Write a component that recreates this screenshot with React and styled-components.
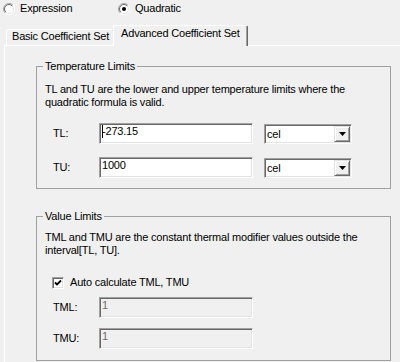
import React, { useId } from "react";
import styled, { createGlobalStyle } from "styled-components";

const Global = createGlobalStyle`
  html, body { margin: 0; padding: 0; background: #f0f0f0; }
  body {
    font-family: "Liberation Sans", Arial, sans-serif;
    font-size: 11px;
    line-height: 13px;
    letter-spacing: -0.2px;
    color: #000;
  }
  #root { width: 400px; height: 362px; overflow: hidden; }
  * { box-sizing: border-box; }
`;

const Page = styled.div`
  width: 400px;
  height: 362px;
  overflow: hidden;
  background: #f0f0f0;
  display: flex;
  flex-direction: column;
`;

const RadioRow = styled.div`
  display: flex;
  padding: 2px 0 0 3px;
  height: 15px;
`;

const RadioOption = styled.label`
  display: flex;
  align-items: center;
  gap: 5px;
  width: ${(p) => p.$w}px;
  height: 13px;
  white-space: nowrap;
`;

const TabStrip = styled.div`
  display: flex;
  align-items: flex-end;
  margin-top: 10px;
  height: 20px;
  padding-left: 6px;
`;

const Tab = styled.div`
  position: relative;
  z-index: ${(p) => (p.$active ? 1 : 0)};
  height: ${(p) => (p.$active ? 21 : 16)}px;
  margin-left: ${(p) => (p.$active ? -2 : 0)}px;
  margin-bottom: ${(p) => (p.$active ? -1 : 0)}px;
  padding: ${(p) => (p.$active ? "1px 7px 0 7px" : "0 5px")};
  background: #f0f0f0;
  border-top: 1px solid #fff;
  border-left: 1px solid #fff;
  border-right: 1px solid #696969;
  box-shadow: inset -1px 0 0 #a0a0a0;
  border-radius: 2px 2px 0 0;
  white-space: nowrap;
`;

const Panel = styled.div`
  flex: 1;
  margin-left: 4px;
  border-left: 1px solid #fff;
  border-top: 1px solid #fff;
  padding: 14px 0 0 31px;
  display: flex;
  flex-direction: column;
`;

const GroupBox = styled.fieldset`
  margin: ${(p) => p.$mt || 0}px 0 0 0;
  width: 355px;
  min-width: 0;
  border: 1px solid #a0a0a0;
  border-radius: 0;
  padding: ${(p) => p.$pt}px 8px ${(p) => p.$pb}px 8px;
  display: flex;
  flex-direction: column;
`;

const Legend = styled.legend`
  padding: 0 2px;
  margin-left: -2px;
  line-height: 13px;
`;

const Desc = styled.p`
  margin: 0;
  line-height: 13px;
`;

const FieldRow = styled.div`
  display: flex;
  align-items: flex-end;
  height: 21px;
  margin-top: ${(p) => p.$mt}px;
`;

const FieldLabel = styled.span`
  align-self: center;
  width: 46px;
  margin-left: 8px;
`;

const sunken = `
  border: 1px solid;
  border-color: #a0a0a0 #fff #fff #a0a0a0;
  box-shadow: inset 1px 1px 0 #696969, inset -1px -1px 0 #e3e3e3;
`;

const TextField = styled.div`
  ${sunken}
  width: 154px;
  height: 21px;
  padding: 1px 0 0 2px;
  background: ${(p) => (p.$disabled ? "#f0f0f0" : "#fff")};
  color: ${(p) => (p.$disabled ? "#6d6d6d" : "#000")};
  white-space: nowrap;
`;

const Caret = styled.span`
  display: inline-block;
  width: 1px;
  height: 13px;
  background: #000;
  vertical-align: top;
  margin-right: -1px;
`;

const Combo = styled.div`
  ${sunken}
  margin-left: 11px;
  width: 88px;
  height: 20px;
  background: #fff;
  display: flex;
  padding: 1px;
`;

const ComboText = styled.span`
  flex: 1;
  align-self: center;
  padding-left: 1px;
`;

const DropButton = styled.div`
  width: 16px;
  height: 16px;
  background: #f0f0f0;
  border: 1px solid;
  border-color: #e3e3e3 #696969 #696969 #e3e3e3;
  box-shadow: inset 1px 1px 0 #fff, inset -1px -1px 0 #a0a0a0;
  display: flex;
  align-items: center;
  justify-content: center;
`;

const CheckRow = styled.label`
  display: flex;
  align-items: center;
  gap: 6px;
  height: 13px;
  margin-top: ${(p) => p.$mt}px;
  padding-left: 7px;
`;

const CheckBox = styled.span`
  ${sunken}
  width: 12px;
  height: 12px;
  background: #fff;
  display: flex;
  align-items: center;
  justify-content: center;
`;

function Radio({ checked }) {
  const id = useId().replace(/:/g, "");
  return (
    <svg width="12" height="12" viewBox="0 0 12 12">
      <defs>
        <linearGradient id={`o${id}`} x1="0" y1="0" x2="1" y2="1">
          <stop offset="0.45" stopColor="#a0a0a0" />
          <stop offset="0.55" stopColor="#ffffff" />
        </linearGradient>
        <linearGradient id={`i${id}`} x1="0" y1="0" x2="1" y2="1">
          <stop offset="0.45" stopColor="#696969" />
          <stop offset="0.55" stopColor="#e3e3e3" />
        </linearGradient>
      </defs>
      <circle cx="6" cy="6" r="5.5" fill="none" stroke={`url(#o${id})`} />
      <circle cx="6" cy="6" r="4.5" fill="#fff" stroke={`url(#i${id})`} />
      {checked && <circle cx="6" cy="6" r="2" fill="#000" />}
    </svg>
  );
}

function Arrow() {
  return (
    <svg width="7" height="4" viewBox="0 0 7 4">
      <polygon points="0,0 7,0 3.5,4" fill="#000" />
    </svg>
  );
}

function Check() {
  return (
    <svg width="8" height="8" viewBox="0 0 8 8">
      <polyline points="1,3.5 3,5.5 7,1.5" fill="none" stroke="#000" strokeWidth="1.8" />
    </svg>
  );
}

export default function App() {
  return (
    <Page>
      <Global />
      <RadioRow>
        <RadioOption $w={115}>
          <Radio />
          Expression
        </RadioOption>
        <RadioOption $w={100}>
          <Radio checked />
          Quadratic
        </RadioOption>
      </RadioRow>
      <TabStrip>
        <Tab>Basic Coefficient Set</Tab>
        <Tab $active>Advanced Coefficient Set</Tab>
      </TabStrip>
      <Panel>
        <GroupBox $pt={10} $pb={10}>
          <Legend>Temperature Limits</Legend>
          <Desc>
            TL and TU are the lower and upper temperature limits where the
            <br />
            quadratic formula is valid.
          </Desc>
          <FieldRow $mt={14}>
            <FieldLabel>TL:</FieldLabel>
            <TextField>
              <Caret />
              -273.15
            </TextField>
            <Combo>
              <ComboText>cel</ComboText>
              <DropButton>
                <Arrow />
              </DropButton>
            </Combo>
          </FieldRow>
          <FieldRow $mt={13}>
            <FieldLabel>TU:</FieldLabel>
            <TextField>1000</TextField>
            <Combo>
              <ComboText>cel</ComboText>
              <DropButton>
                <Arrow />
              </DropButton>
            </Combo>
          </FieldRow>
        </GroupBox>
        <GroupBox $mt={21} $pt={8} $pb={11}>
          <Legend>Value Limits</Legend>
          <Desc>
            TML and TMU are the constant thermal modifier values outside the
            <br />
            interval[TL, TU].
          </Desc>
          <CheckRow $mt={19}>
            <CheckBox>
              <Check />
            </CheckBox>
            Auto calculate TML, TMU
          </CheckRow>
          <FieldRow $mt={8}>
            <FieldLabel>TML:</FieldLabel>
            <TextField $disabled>1</TextField>
          </FieldRow>
          <FieldRow $mt={10}>
            <FieldLabel>TMU:</FieldLabel>
            <TextField $disabled>1</TextField>
          </FieldRow>
        </GroupBox>
      </Panel>
    </Page>
  );
}
